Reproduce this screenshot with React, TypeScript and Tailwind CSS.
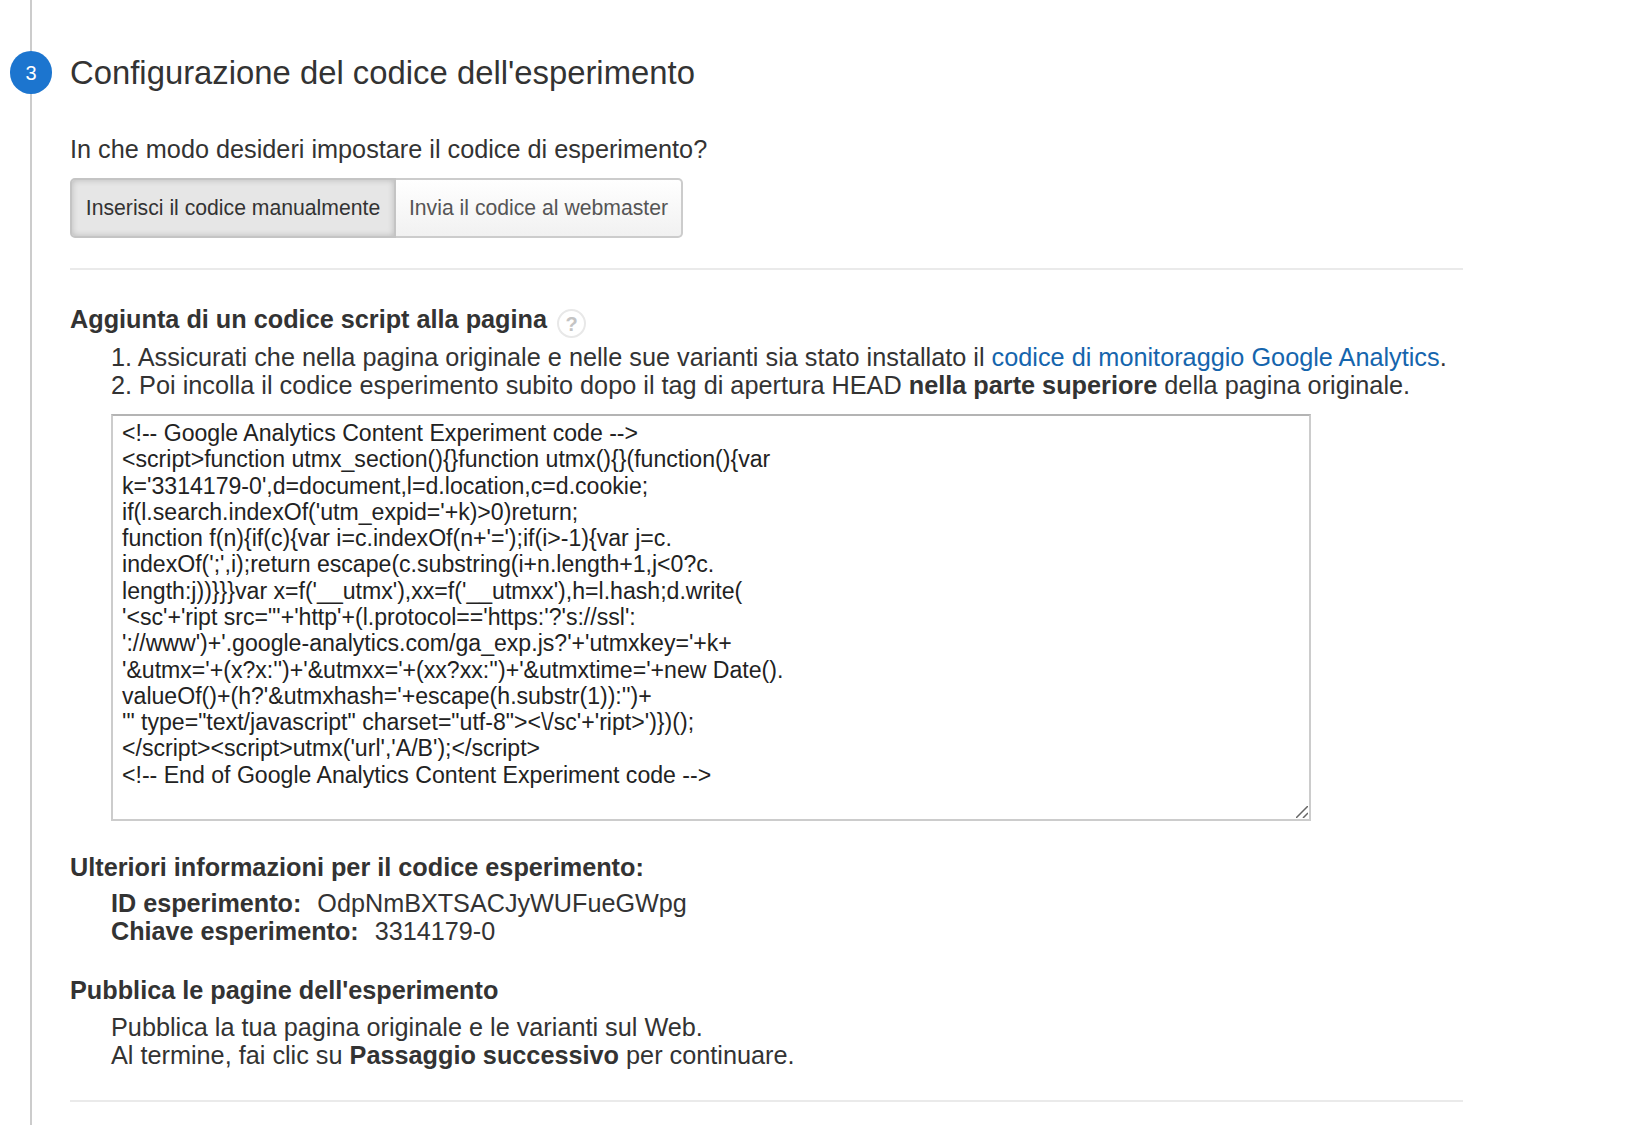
import React from 'react';

const EXPERIMENT_CODE = `<!-- Google Analytics Content Experiment code -->
<script>function utmx_section(){}function utmx(){}(function(){var
k='3314179-0',d=document,l=d.location,c=d.cookie;
if(l.search.indexOf('utm_expid='+k)>0)return;
function f(n){if(c){var i=c.indexOf(n+'=');if(i>-1){var j=c.
indexOf(';',i);return escape(c.substring(i+n.length+1,j<0?c.
length:j))}}}var x=f('__utmx'),xx=f('__utmxx'),h=l.hash;d.write(
'<sc'+'ript src="'+'http'+(l.protocol=='https:'?'s://ssl':
'://www')+'.google-analytics.com/ga_exp.js?'+'utmxkey='+k+
'&utmx='+(x?x:'')+'&utmxx='+(xx?xx:'')+'&utmxtime='+new Date().
valueOf()+(h?'&utmxhash='+escape(h.substr(1)):'')+
'" type="text/javascript" charset="utf-8"><\\/sc'+'ript>')})();
</script><script>utmx('url','A/B');</script>
<!-- End of Google Analytics Content Experiment code -->`;

export default function App() {
  return (
    <div className="relative h-[1125px] w-[1626px] overflow-hidden bg-white font-['Liberation_Sans',Arial,sans-serif] text-[#333]">
      <div className="absolute bottom-0 left-[30px] top-0 w-[2px] bg-[#ccc]" />

      <div className="w-[1463px] pl-[70px] pt-[51px]">
        <div className="relative flex h-[44px] items-center">
          <div className="absolute left-[-60px] top-0 flex h-[43px] w-[42px] items-center justify-center rounded-full bg-[#1c75cf] text-[20px] text-white">
            3
          </div>
          <h1 className="text-[32.85px] font-normal leading-[44px] text-[#333]">
            Configurazione del codice dell'esperimento
          </h1>
        </div>

        <p className="mt-[38.5px] text-[25.25px] leading-[30px]">In che modo desideri impostare il codice di esperimento?</p>

        <div className="mt-[14px] flex h-[60px] w-[613px] text-[21.2px]">
          <button
            type="button"
            className="w-[326px] rounded-l-[5px] border-2 border-[#c4c4c4] bg-[#e6e6e6] text-[#333] shadow-[inset_0_0_6px_rgba(0,0,0,0.2)]"
          >
            Inserisci il codice manualmente
          </button>
          <button
            type="button"
            className="flex-1 rounded-r-[5px] border-2 border-l-0 border-[#ccc] bg-gradient-to-b from-white to-[#f1f1f1] text-[#555]"
          >
            Invia il codice al webmaster
          </button>
        </div>

        <div className="mt-[30.5px] h-[2px] bg-[#eaeaea]" />

        <div className="mt-[34px] flex items-start gap-[10px]">
          <h2 className="text-[25.25px] font-bold leading-[30px]">Aggiunta di un codice script alla pagina</h2>
          <span className="mt-[5px] flex h-[29px] w-[29px] items-center justify-center rounded-full border-2 border-[#e8e8e8] text-[20px] font-bold text-[#c4c4c4]">
            ?
          </span>
        </div>

        <ol className="mt-[5px] pl-[41px] text-[25.27px] leading-[28px]">
          <li>
            1. Assicurati che nella pagina originale e nelle sue varianti sia stato installato il{' '}
            <a href="#" className="text-[#1565ad]">
              codice di monitoraggio Google Analytics
            </a>
            .
          </li>
          <li>
            2. Poi incolla il codice esperimento subito dopo il tag di apertura HEAD{' '}
            <b>nella parte superiore</b> della pagina originale.
          </li>
        </ol>

        <div className="relative ml-[41px] mt-[15px] h-[407px] w-[1200px]">
          <textarea
            readOnly
            value={EXPERIMENT_CODE}
            className="block h-full w-full resize-none border-2 border-[#ccc] border-t-[#b4b4b4] px-[9px] py-[4px] text-[23.1px] leading-[26.28px] text-[#222] outline-none"
          />
          <svg viewBox="0 0 12 12" className="absolute bottom-[3px] right-[3px] h-[12px] w-[12px]">
            <path d="M0 12 L12 0 M7 12 L12 7" stroke="#666" strokeWidth="1.5" fill="none" />
          </svg>
        </div>

        <h2 className="mt-[31px] text-[25.25px] font-bold leading-[30px]">Ulteriori informazioni per il codice esperimento:</h2>
        <div className="mt-[6.5px] pl-[41px] text-[25.2px] leading-[28px]">
          <div>
            <b>ID esperimento:</b>
            <span className="ml-[16px]">OdpNmBXTSACJyWUFueGWpg</span>
          </div>
          <div>
            <b>Chiave esperimento:</b>
            <span className="ml-[16px]">3314179-0</span>
          </div>
        </div>

        <h2 className="mt-[30px] text-[25.25px] font-bold leading-[30px]">Pubblica le pagine dell'esperimento</h2>
        <div className="mt-[8.5px] pl-[41px] text-[25.25px] leading-[28px]">
          <div>Pubblica la tua pagina originale e le varianti sul Web.</div>
          <div>
            Al termine, fai clic su <b>Passaggio successivo</b> per continuare.
          </div>
        </div>

        <div className="mt-[31px] h-[2px] bg-[#eaeaea]" />
      </div>
    </div>
  );
}
